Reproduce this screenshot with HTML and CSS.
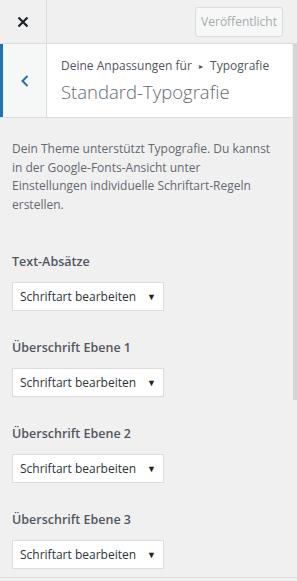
FILE: index.html
```html
<!DOCTYPE html>
<html lang="de">
  <head>
    <meta charset="UTF-8" />
    <meta name="viewport" content="width=device-width, initial-scale=1.0" />
    <title>Standard-Typografie</title>
    <link rel="stylesheet" href="styles.css">
  </head>
  <body>
    <header class="customizer-header">
      <a href="#" class="close-button" aria-label="Schließen">
        <svg width="12" height="12" viewBox="0 0 12 12">
          <path d="M1.5 1.5 L10.5 10.5 M10.5 1.5 L1.5 10.5" stroke="#1d2327" stroke-width="2.2" fill="none" />
        </svg>
      </a>
      <div class="header-actions">
        <button class="publish-button" disabled>Veröffentlicht</button>
      </div>
    </header>

    <div class="section-title">
      <a href="#" class="back-button" aria-label="Zurück">
        <svg width="10" height="14" viewBox="0 0 10 14">
          <path d="M7.5 2 L2.5 7 L7.5 12" stroke="#2271b1" stroke-width="2" fill="none" />
        </svg>
      </a>
      <div class="section-title-text">
        <span class="breadcrumb">Deine Anpassungen für <span class="breadcrumb-arrow">▸</span> Typografie</span>
        <h2 class="section-heading">Standard-Typografie</h2>
      </div>
    </div>

    <main class="section-body">
      <p class="description">
        Dein Theme unterstützt Typografie. Du kannst in der Google-Fonts-Ansicht unter<br>
        Einstellungen individuelle Schriftart-Regeln erstellen.
      </p>

      <div class="control">
        <span class="control-label">Text-Absätze</span>
        <button class="font-select">Schriftart bearbeiten <span class="select-arrow">▼</span></button>
      </div>
      <div class="control">
        <span class="control-label">Überschrift Ebene 1</span>
        <button class="font-select">Schriftart bearbeiten <span class="select-arrow">▼</span></button>
      </div>
      <div class="control">
        <span class="control-label">Überschrift Ebene 2</span>
        <button class="font-select">Schriftart bearbeiten <span class="select-arrow">▼</span></button>
      </div>
      <div class="control">
        <span class="control-label">Überschrift Ebene 3</span>
        <button class="font-select">Schriftart bearbeiten <span class="select-arrow">▼</span></button>
      </div>
    </main>

    <div class="scrollbar"></div>
    <footer class="customizer-footer"></footer>
  </body>
</html>
```

FILE: styles.css
```css
* {
  padding: 0;
  margin: 0;
  box-sizing: border-box;
}

body {
  font-family: "Open Sans", "Noto Sans", sans-serif;
  font-size: 12px;
  color: #50575e;
  background-color: #f0f0f1;
  height: 581px;
  overflow: hidden;
}

a {
  text-decoration: none;
}

/* ヘッダー */
.customizer-header {
  display: flex;
  height: 44px;
  border-bottom: 1px solid #dcdcde;
}

.close-button {
  display: flex;
  align-items: center;
  justify-content: center;
  width: 47px;
  height: 100%;
  border-right: 1px solid #dcdcde;
}

.header-actions {
  display: flex;
  flex: 1;
  align-items: center;
  justify-content: flex-end;
  padding-right: 14px;
}

.publish-button {
  height: 30px;
  padding: 0 5px;
  font-family: inherit;
  font-size: 12px;
  color: #a7aaad;
  background: #f6f7f7;
  border: 1px solid #dcdcde;
  border-radius: 3px;
}

/* セクションタイトル */
.section-title {
  display: flex;
  width: 292px;
  height: 74px;
  background: #fff;
  border-bottom: 1px solid #dcdcde;
}

.back-button {
  display: flex;
  align-items: center;
  justify-content: center;
  width: 47px;
  height: 100%;
  background: #f6f7f7;
  border-left: 3px solid #2271b1;
  border-right: 1px solid #dcdcde;
}

.section-title-text {
  display: flex;
  flex-direction: column;
  padding: 13px 0 0 14px;
}

.breadcrumb {
  font-size: 12px;
  line-height: 18px;
  color: #50575e;
}

.breadcrumb-arrow {
  font-size: 8px;
  margin: 0 4px;
  vertical-align: 1px;
}

.section-heading {
  margin-top: 4px;
  font-size: 18.5px;
  font-weight: 300;
  line-height: 26px;
  color: #646970;
}

/* 本文 */
.section-body {
  width: 292px;
  padding: 22px 12px 0;
}

.description {
  font-size: 12px;
  line-height: 18.6px;
  color: #646970;
  margin-bottom: 38px;
}

.control {
  display: flex;
  flex-direction: column;
  align-items: flex-start;
  margin-bottom: 27px;
}

.control-label {
  font-size: 12.5px;
  font-weight: 600;
  line-height: 20px;
  color: #50575e;
  margin-bottom: 10px;
}

.font-select {
  display: flex;
  align-items: center;
  justify-content: space-between;
  width: 152px;
  height: 29px;
  padding: 0 7px;
  font-family: inherit;
  font-size: 12px;
  color: #2c3338;
  background: #fff;
  border: 1px solid #dcdcde;
}

.select-arrow {
  font-size: 9px;
  color: #1d2327;
}

/* 装飾 */
.scrollbar {
  position: absolute;
  top: 44px;
  right: 0;
  width: 4px;
  height: 356px;
  background: #d6d6d6;
}

.customizer-footer {
  position: absolute;
  left: 0;
  bottom: 0;
  width: 100%;
  height: 4px;
  background: #f0f0f1;
  border-top: 1px solid #dcdcde;
}
```
